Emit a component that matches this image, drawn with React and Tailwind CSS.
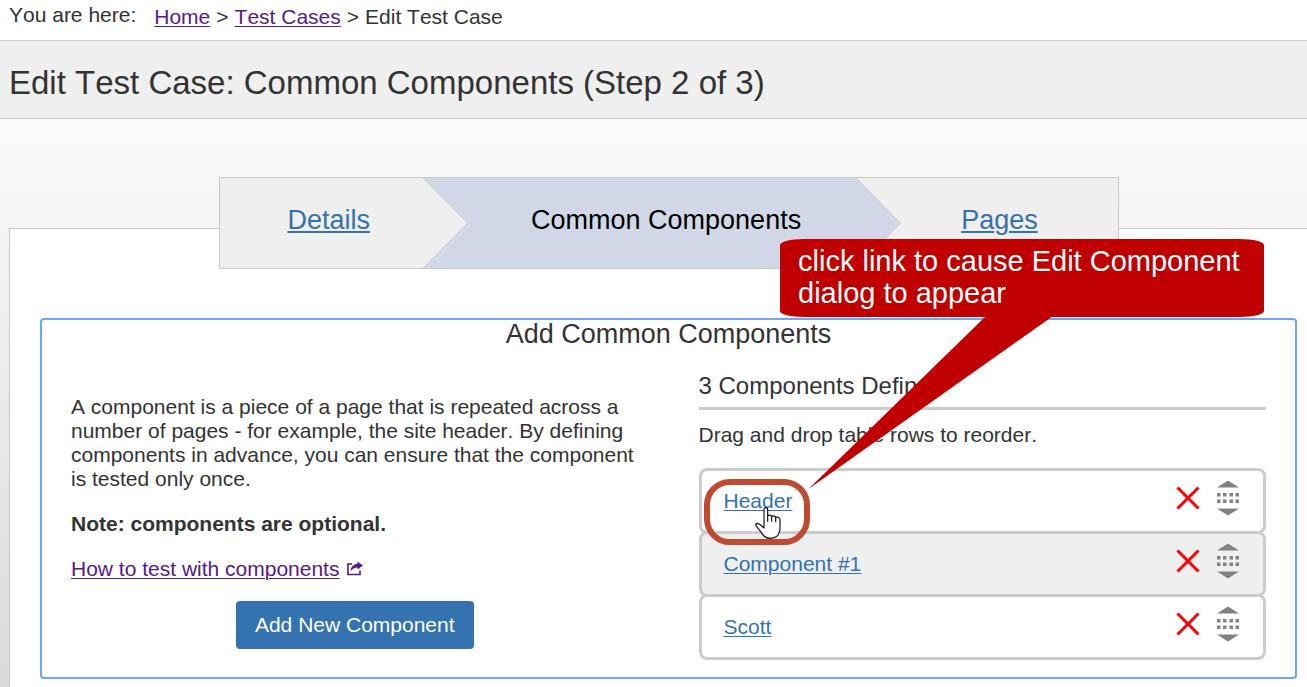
const components = [
  { name: "Header", highlighted: true },
  { name: "Component #1" },
  { name: "Scott" },
];

const stepLink = "text-[#3572b0] underline underline-offset-2 decoration-2";
const linkBlue = "text-[#3572b0] underline underline-offset-2 decoration-1";
const linkPurple = "text-[#551a8b] underline underline-offset-2 decoration-1";

function StepArrow({ fill, rest }) {
  return (
    <svg className="h-full w-[45px] shrink-0" viewBox="0 0 45 90" preserveAspectRatio="none" aria-hidden="true">
      <rect width="45" height="90" fill={rest} />
      <path d="M0 0 L44.5 45 L0 90 Z" fill={fill} />
      <path d="M0 0 L44.5 45 L0 90" fill="none" stroke="#cccccc" strokeWidth="1" />
    </svg>
  );
}

function Wizard() {
  return (
    <nav aria-label="Steps" className="relative z-10 mx-auto -mb-[41px] w-[900px] max-w-full">
      <ol className="flex h-[92px] border border-[#c8c8c8] bg-[#efefef] text-[27px] leading-8">
        <li className="pt-[26px] pr-[53px] pl-[68px]">
          <a href="#details" className={stepLink}>Details</a>
        </li>
        <StepArrow fill="#efefef" rest="#d1d7e6" />
        <li className="bg-[#d1d7e6] pt-[26px] pr-[55px] pl-[63px] text-black" aria-current="step">
          Common Components
        </li>
        <StepArrow fill="#d1d7e6" rest="#efefef" />
        <li className="flex-1 pt-[26px] pl-[60px]">
          <a href="#pages" className={stepLink}>Pages</a>
        </li>
      </ol>
    </nav>
  );
}

function ShareIcon() {
  return (
    <svg className="ml-2 inline-block h-[15px] w-4 align-baseline" viewBox="0 0 16 15" aria-hidden="true">
      <path d="M5 3 H1 V13.5 H13 V9.5" fill="none" stroke="#551a8b" strokeWidth="1.6" />
      <path d="M10.5 0.5 L16 4.500 L10.5 8.500 V6.500 C8 6.500 6 7.500 3.500 10 C4 6 6.500 3 10.5 2.700 Z" fill="#551a8b" />
    </svg>
  );
}

function DeleteIcon() {
  return (
    <svg className="size-6" viewBox="0 0 24 24" aria-hidden="true">
      <path d="M1.500 1.500 L22.500 22.500 M22.500 1.500 L1.500 22.500" stroke="#ff0000" strokeWidth="3" />
    </svg>
  );
}

function DragIcon() {
  return (
    <svg className="h-9 w-[22px]" viewBox="0 0 22 36" fill="#808285" aria-hidden="true">
      <path d="M0 7.500 L11 0.500 L22 7.500 Z M0 28.500 L11 35.500 L22 28.500 Z" />
      {[13, 19.5].map((y) =>
        [0, 6, 12.5, 18.5].map((x) => <rect key={`${x}-${y}`} x={x} y={y} width="3.500" height="3.500" />)
      )}
    </svg>
  );
}

function HandCursor() {
  return (
    <svg className="absolute top-9 left-[53px] z-10 h-8 w-[26px]" viewBox="0 0 78 96" aria-hidden="true">
      <path
        d="M27 8 Q27 2 32 2 Q38 2 38 8 V26 Q44 22 50 27 V29 Q56 24 62 30 V32 Q70 28 75 36 V66 Q74 76 68 86 Q60 94 47 94 Q34 94 27 87 Q21 80 17 74 L3 56 Q0 50 7 49 Q14 50 20 57 L27 63 Z"
        fill="#ffffff"
        stroke="#111122"
        strokeWidth="3.500"
        strokeLinejoin="round"
      />
      <path d="M38 24 V44 M50 27 V44 M62 30 V46" stroke="#111122" strokeWidth="3.500" fill="none" />
    </svg>
  );
}

function ComponentRow({ name, highlighted }) {
  return (
    <tr className="relative -mt-[3px] flex h-[66px] items-center rounded-lg border-3 border-[#cccccc] bg-white pr-6 pl-[22px] first:mt-0 even:bg-[#efefef]">
      <td className="flex-1">
        <a href="#component" className={linkBlue}>{name}</a>
        {highlighted && (
          <>
            <span className="absolute top-2 left-[2px] z-10 h-[66px] w-[106px] rounded-[26px] border-6 border-[#be4b31]" />
            <HandCursor />
          </>
        )}
      </td>
      <td className="pr-[17px] pb-[6px]">
        <button type="button" aria-label={`Delete ${name}`} className="block">
          <DeleteIcon />
        </button>
      </td>
      <td className="pb-[6px]">
        <button type="button" aria-label={`Reorder ${name}`} className="block">
          <DragIcon />
        </button>
      </td>
    </tr>
  );
}

function Callout() {
  return (
    <aside className="absolute top-[239px] left-[780px] z-20 w-[484px]">
      <p className="h-[78px] rounded-[24px/6px] bg-[#c00000] pt-[6px] pl-[18px] text-[29px] leading-8 whitespace-nowrap text-white">
        click link to cause Edit Component
        <br />
        dialog to appear
      </p>
      <svg className="absolute top-[77px] left-[28px] h-[173px] w-[246px]" viewBox="0 0 246 173" aria-hidden="true">
        <path d="M178 0 H245 L0.500 173 Z" fill="#c00000" />
      </svg>
    </aside>
  );
}

export default function App() {
  return (
    <div className="relative flex min-h-screen flex-col overflow-hidden bg-white font-['Liberation_Sans',Arial,sans-serif] text-[21px] leading-6 text-[#333333] [font-kerning:none]">
      <nav aria-label="Breadcrumb" className="flex h-10 gap-[18px] pt-[3px] pl-[9px]">
        <span>You are here:</span>
        <ol className="flex gap-[6px] pt-[2px]">
          <li><a href="#home" className={linkPurple}>Home</a></li>
          <li aria-hidden="true">&gt;</li>
          <li><a href="#cases" className={linkPurple}>Test Cases</a></li>
          <li aria-hidden="true">&gt;</li>
          <li>Edit Test Case</li>
        </ol>
      </nav>
      <header className="border-y border-[#cccccc] bg-[#efefef] pt-[22px] pb-[15px] pl-[9px]">
        <h1 className="text-[33px] leading-10">Edit Test Case: Common Components (Step 2 of 3)</h1>
      </header>
      <main className="-mr-[21px] flex flex-1 flex-col bg-linear-to-b from-[#fbfbfb] to-[#dadada] pt-[58px] pl-[9px]">
        <Wizard />
        <div className="flex-1 border border-[#c8c8c8] bg-white px-[30px] pt-[89px] pb-[9px]">
          <section className="rounded-sm border-2 border-[#6fa5ff] px-[29px] pb-[17px]">
            <h2 className="text-center text-[27px] leading-7">Add Common Components</h2>
            <div className="grid grid-cols-2 gap-[60px] pt-[23px]">
              <div className="flex flex-col pt-6">
                <p>
                  A component is a piece of a page that is repeated across a number of pages - for example, the
                  site header. By defining components in advance, you can ensure that the component is tested
                  only once.
                </p>
                <p className="mt-[21px] font-bold">Note: components are optional.</p>
                <p className="mt-[21px]">
                  <a href="#help" className={linkPurple}>How to test with components</a>
                  <ShareIcon />
                </p>
                <button type="button" className="mt-5 h-12 self-center rounded bg-[#3572b0] px-[19px] text-white">
                  Add New Component
                </button>
              </div>
              <div>
                <h3 className="border-b-3 border-[#cccccc] pt-px pb-[7px] text-[24px] leading-7">3 Components Defined</h3>
                <p className="pt-[13px] pb-[21px]">Drag and drop table rows to reorder.</p>
                <table className="block w-full">
                  <tbody className="block">
                    {components.map((c) => (
                      <ComponentRow key={c.name} {...c} />
                    ))}
                  </tbody>
                </table>
              </div>
            </div>
          </section>
        </div>
      </main>
      <Callout />
    </div>
  );
}
